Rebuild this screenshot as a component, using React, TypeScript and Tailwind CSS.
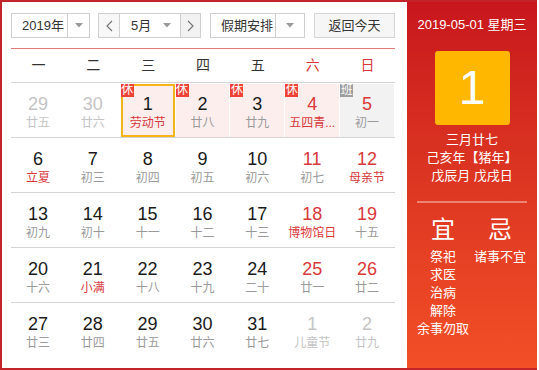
import React from "react";

type Cell = {
  n: number;
  l: string;
  faded?: boolean;
  redNum?: boolean;
  redLunar?: boolean;
  badge?: "休" | "班";
  today?: boolean;
};

const rows: Cell[][] = [
  [
    { n: 29, l: "廿五", faded: true },
    { n: 30, l: "廿六", faded: true },
    { n: 1, l: "劳动节", redLunar: true, badge: "休", today: true },
    { n: 2, l: "廿八", badge: "休" },
    { n: 3, l: "廿九", badge: "休" },
    { n: 4, l: "五四青...", redNum: true, redLunar: true, badge: "休" },
    { n: 5, l: "初一", redNum: true, badge: "班" },
  ],
  [
    { n: 6, l: "立夏", redLunar: true },
    { n: 7, l: "初三" },
    { n: 8, l: "初四" },
    { n: 9, l: "初五" },
    { n: 10, l: "初六" },
    { n: 11, l: "初七", redNum: true },
    { n: 12, l: "母亲节", redNum: true, redLunar: true },
  ],
  [
    { n: 13, l: "初九" },
    { n: 14, l: "初十" },
    { n: 15, l: "十一" },
    { n: 16, l: "十二" },
    { n: 17, l: "十三" },
    { n: 18, l: "博物馆日", redNum: true, redLunar: true },
    { n: 19, l: "十五", redNum: true },
  ],
  [
    { n: 20, l: "十六" },
    { n: 21, l: "小满", redLunar: true },
    { n: 22, l: "十八" },
    { n: 23, l: "十九" },
    { n: 24, l: "二十" },
    { n: 25, l: "廿一", redNum: true },
    { n: 26, l: "廿二", redNum: true },
  ],
  [
    { n: 27, l: "廿三" },
    { n: 28, l: "廿四" },
    { n: 29, l: "廿五" },
    { n: 30, l: "廿六" },
    { n: 31, l: "廿七" },
    { n: 1, l: "儿童节", faded: true },
    { n: 2, l: "廿九", faded: true },
  ],
];

const Caret = () => (
  <svg width="8" height="5" viewBox="0 0 8 5">
    <path d="M0 0 L8 0 L4 4.5 Z" fill="#9a9a9a" />
  </svg>
);

const Chevron = ({ dir }: { dir: "l" | "r" }) => (
  <svg width="7" height="12" viewBox="0 0 7 12">
    <polyline
      points={dir === "l" ? "6,1 1,6 6,11" : "1,1 6,6 1,11"}
      fill="none"
      stroke="#777"
      strokeWidth="1.2"
    />
  </svg>
);

function DayCell({ c }: { c: Cell }) {
  const bg = c.badge === "休" ? "bg-[#fdeeee]" : c.badge === "班" ? "bg-[#f2f2f2]" : "bg-white";
  const numColor = c.faded ? "text-[#c4c4c4]" : c.redNum ? "text-[#d8383a]" : "text-[#1a1a1a]";
  const lunarColor = c.faded ? "text-[#c4c4c4]" : c.redLunar ? "text-[#d8383a]" : "text-[#9a9a9a]";
  return (
    <div className="h-full pt-[1px] pr-[1px]">
      <div
        className={
          "relative h-full flex flex-col items-center " +
          bg +
          (c.today ? " border-2 border-[#f7b416] pt-[7px]" : " pt-[9px]")
        }
      >
        {c.badge && (
          <div
            className={
              "absolute w-[13px] h-[13px] text-[12px] leading-[13px] text-white flex items-center justify-center overflow-hidden " +
              (c.badge === "休" ? "bg-[#ee4336]" : "bg-[#9d9d9d]") +
              (c.today ? " -top-[2px] -left-[2px]" : " top-0 left-0")
            }
          >
            {c.badge}
          </div>
        )}
        <div className={"text-[18px] leading-[22px] " + numColor}>{c.n}</div>
        <div className={"text-[12px] leading-[16px] whitespace-nowrap " + lunarColor}>{c.l}</div>
      </div>
    </div>
  );
}

export default function App() {
  const weekdays = ["一", "二", "三", "四", "五", "六", "日"];
  return (
    <div className="font-['Liberation_Sans','Noto_Sans_CJK_SC',sans-serif] bg-white w-[539px] h-[370px]">
      <div className="w-[537px] h-[370px] border-2 border-r-0 border-[#c2242a] flex">
        {/* left panel */}
        <div className="w-[405px] h-full bg-white pl-[9px] pr-[12px] pt-[11px]">
          {/* controls */}
          <div className="flex h-[25px] text-[13px] text-[#333]">
            <div className="w-[79px] h-full border border-[#cfcfcf] flex">
              <div className="w-[55px] pl-[10px] flex items-center">2019年</div>
              <div className="flex-1 border-l border-[#cfcfcf] flex items-center justify-center">
                <Caret />
              </div>
            </div>
            <div className="ml-[8px] w-[103px] h-full border border-[#cfcfcf] flex">
              <div className="w-[21px] bg-[#f7f7f7] border-r border-[#cfcfcf] flex items-center justify-center">
                <Chevron dir="l" />
              </div>
              <div className="w-[60px] flex items-center justify-between pl-[11px] pr-[9px]">
                <span>5月</span>
                <Caret />
              </div>
              <div className="flex-1 bg-[#f2f2f2] border-l border-[#cfcfcf] flex items-center justify-center">
                <Chevron dir="r" />
              </div>
            </div>
            <div className="ml-[9px] w-[95px] h-full border border-[#cfcfcf] flex">
              <div className="w-[64px] pl-[10px] flex items-center">假期安排</div>
              <div className="flex-1 border-l border-[#cfcfcf] flex items-center justify-center">
                <Caret />
              </div>
            </div>
            <div className="ml-[9px] w-[81px] h-full border border-[#d6d6d6] bg-[#f6f6f6] flex items-center justify-center">
              返回今天
            </div>
          </div>
          <div className="mt-[10px] h-[1px] bg-[#e07a78]" />
          {/* weekday header */}
          <div className="grid grid-cols-7 h-[34px] border-b border-[#d4d4d4] text-[14px]">
            {weekdays.map((w, i) => (
              <div
                key={w}
                className={"flex items-center justify-center " + (i >= 5 ? "text-[#d8383a]" : "text-[#333]")}
              >
                {w}
              </div>
            ))}
          </div>
          {/* days */}
          {rows.map((r, ri) => (
            <div
              key={ri}
              className={"grid grid-cols-7 h-[55px] " + (ri < rows.length - 1 ? "border-b border-[#d4d4d4]" : "")}
            >
              {r.map((c, ci) => (
                <DayCell key={ci} c={c} />
              ))}
            </div>
          ))}
        </div>
        {/* right panel */}
        <div className="w-[130px] h-full bg-linear-to-b from-[#c8161d] to-[#f24f27] flex flex-col items-center text-white">
          <div className="mt-[14px] text-[13px] leading-[18px]">2019-05-01 星期三</div>
          <div className="mt-[17px] w-[75px] h-[74px] rounded-[3px] bg-[#ffb700] flex items-center justify-center text-[48px] leading-none">
            1
          </div>
          <div className="mt-[6px] text-[13px] leading-[18px] text-center">
            <div>三月廿七</div>
            <div>己亥年【猪年】</div>
            <div>戊辰月 戊戌日</div>
          </div>
          <div className="mt-[16px] w-[110px] h-[2px] bg-[#ef8470]" />
          <div className="mt-[12px] w-full pl-[8px] flex gap-[1px]">
            <div className="w-[56px] flex flex-col items-center">
              <div className="text-[24px] leading-[30px]">宜</div>
              <div className="mt-[3px] text-[13px] leading-[18px] text-center whitespace-nowrap">
                <div>祭祀</div>
                <div>求医</div>
                <div>治病</div>
                <div>解除</div>
                <div>余事勿取</div>
              </div>
            </div>
            <div className="w-[56px] flex flex-col items-center">
              <div className="text-[24px] leading-[30px]">忌</div>
              <div className="mt-[3px] text-[13px] leading-[18px] text-center whitespace-nowrap">
                <div>诸事不宜</div>
              </div>
            </div>
          </div>
        </div>
      </div>
    </div>
  );
}
